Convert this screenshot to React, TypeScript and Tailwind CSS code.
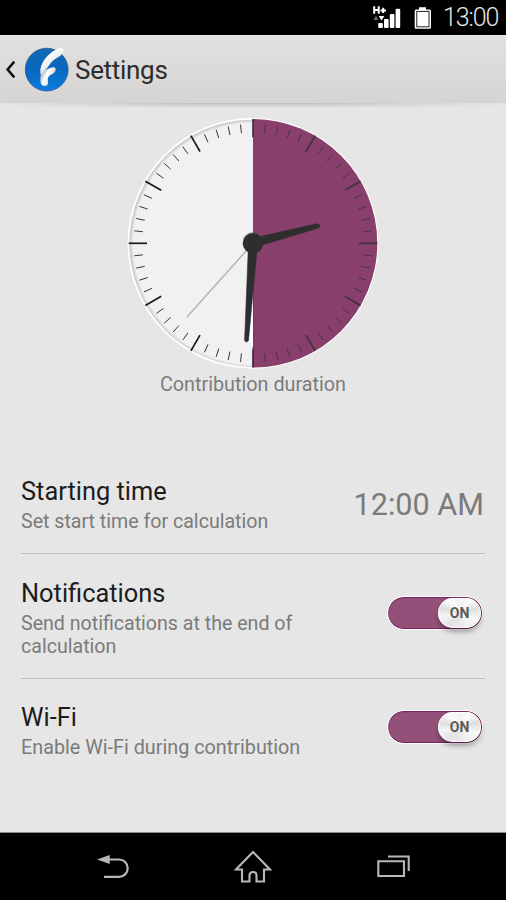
interface ToggleProps {
  label: string;
}

interface SettingRowProps {
  title: string;
  summary: string;
  className: string;
  summaryClassName?: string;
  children: React.ReactNode;
}

const StatusBar = () => {
  return (
    <div className="flex h-[35px] shrink-0 items-center justify-end bg-black pr-[8px] text-white">
      <svg width="64" height="35" viewBox="370 0 64 35" fill="#fff">
        <path d="M374.2 6.3V13.7M378.7 6.3V13.7M374 10H379M380.5 10.4H386M383.2 7.7V13" stroke="#fff" strokeWidth="2" fill="none" />
        <path d="M373.3 20 376 15.7 378.7 20Z" fill="#666" />
        <path d="M378.7 16H384.3L381.5 20.4Z" />
        <rect x="378.2" y="23" width="4.6" height="5" rx="1" />
        <rect x="384" y="19" width="4.6" height="9" rx="1" />
        <rect x="389.8" y="14" width="4.6" height="14" rx="1" />
        <rect x="395.6" y="8.7" width="4.6" height="19.3" rx="1" />
        <path d="M419 7.2H426V9.5H429.5Q431 9.5 431 11V27.3Q431 28.8 429.5 28.8H416Q414.7 28.8 414.7 27.3V11Q414.7 9.5 416 9.5H419Z" />
        <rect x="416.8" y="11.4" width="12.2" height="15.4" fill="none" stroke="#222" strokeWidth="1" />
      </svg>
      <span className="ml-[9px] w-[55px] text-right text-[25px] leading-[35px] font-light tracking-[-1.1px] whitespace-nowrap text-[#e6e6e6]">
        13:00
      </span>
    </div>
  );
};

const AppLogo = () => {
  return (
    <svg width="46" height="46" viewBox="0 0 46 46">
      <defs>
        <linearGradient id="disc" x1="0" y1="0" x2="0" y2="1">
          <stop offset="0" stopColor="#1568b4" />
          <stop offset="0.5" stopColor="#0868bf" />
          <stop offset="1" stopColor="#0a7de0" />
        </linearGradient>
        <linearGradient id="feather" x1="0.3" y1="0.2" x2="0.6" y2="0.6">
          <stop offset="0" stopColor="#fff" />
          <stop offset="0.6" stopColor="#f2f2f2" />
          <stop offset="1" stopColor="#c9cdd0" />
        </linearGradient>
        <linearGradient id="stem" x1="0.2" y1="0.3" x2="0.7" y2="0.6">
          <stop offset="0" stopColor="#c2c8cc" />
          <stop offset="0.4" stopColor="#fff" />
          <stop offset="1" stopColor="#d9dde0" />
        </linearGradient>
      </defs>
      <circle cx="22.7" cy="22.6" r="21.4" fill="url(#disc)" stroke="#235b8c" strokeWidth="0.8" />
      <path
        d="M16.8 28.3C19.6 24 25.5 20.4 29.3 20.3C32 20.3 32.4 23 30.6 25.2C28.8 27.5 25.1 27.9 24 31C23.5 33 24.5 34.8 24 37C23 39.6 18.5 39.5 17.1 36.9C16.2 34.5 16.1 31 16.8 28.3Z"
        fill="url(#stem)"
      />
      <path
        d="M36 1.3C38.8 0.6 40.4 2 39.7 4.4C38.5 8.4 33.4 9.9 29.3 13.4C24.6 17.4 23.4 22.5 17 28.6C15.5 24.8 16.4 19.8 18.6 15.8C22 9.2 28.9 3 36 1.3Z"
        fill="url(#feather)"
      />
    </svg>
  );
};

const Header = () => {
  return (
    <header className="relative flex h-[68px] shrink-0 items-center border-t border-[#eeecea] bg-linear-to-b from-[#e3e1df] to-[#d5d4d2]">
      <svg className="ml-[5px]" width="12" height="20" viewBox="0 0 12 20" fill="none" stroke="#111" strokeWidth="2.5">
        <path d="M9.3 1.6 2.6 9.5 9.3 17.4" />
      </svg>
      <div className="ml-[7px]">
        <AppLogo />
      </div>
      <h1 className="ml-[5px] text-[26px] leading-[30px] tracking-[-0.3px] text-[#2c2c2c]">Settings</h1>
      <div className="absolute inset-x-0 top-full h-[5px] bg-linear-to-b from-[#bcbcbc] to-[#bcbcbc]/0 mask-r-from-60% mask-l-from-60%" />
    </header>
  );
};

const Clock = () => {
  const ticks = Array.from({ length: 60 }, (_, i) => i);

  return (
    <svg width="256" height="256" viewBox="-128 -128.3 256 256">
      <defs>
        <radialGradient id="face" gradientUnits="userSpaceOnUse" cx="1" cy="0.5" r="125">
          <stop offset="0.965" stopColor="#f1f1f1" />
          <stop offset="1" stopColor="#bdbdbd" />
        </radialGradient>
      </defs>
      <circle r="125.4" fill="#fff" />
      <circle r="123.6" fill="url(#face)" />
      <path d="M0 -124.3A124.3 124.3 0 0 1 0 124.3Z" fill="#883f6b" />
      {ticks.map((i) => {
        const major = i % 5 === 0;
        const right = i > 0 && i < 30;
        return (
          <line
            key={i}
            y1={major ? -124.3 : -119.4}
            y2={major ? -106 : -110.7}
            transform={`rotate(${i * 6})`}
            stroke={right || i % 30 === 0 ? "#3b353a" : "#181818"}
            strokeWidth={major ? 1.7 : 0.8}
          />
        );
      })}
      <path d="M0 0V124" stroke="#4c2c40" strokeWidth="0.6" />
      <path d="M0 20 0 104 -4.5 98Z" fill="#fff" />
      <path d="M0 0 -66.3 74" stroke="#b5b5b5" strokeWidth="1.5" />
      <path d="M-4.5 0 -8.4 97Q-6.4 100.5 -4.5 97L3.8 8Z" fill="#2e2e2e" stroke="#2e2e2e" strokeWidth="0.6" strokeLinejoin="round" />
      <path d="M5 -6.5 63.5 -19.9Q67 -20 67.2 -17.8Q67.4 -15.5 65 -14.7L6 3Z" fill="#2e2e2e" />
      <circle r="10.3" fill="#2e2e2e" />
      <path d="M-9.5 -4.5A10.5 10.5 0 0 1 9.5 -4.5" fill="none" stroke="#555" strokeWidth="0.6" />
    </svg>
  );
};

const Toggle = ({ label }: ToggleProps) => {
  return (
    <button
      type="button"
      className="flex h-[34px] w-[96px] items-center justify-end rounded-full border border-white bg-[#935179] bg-clip-padding shadow-[inset_0_1px_1px_#77255a,inset_0_-1px_0_#77255a,inset_-1px_0_0_#77255a]"
    >
      <span className="mr-px flex h-[30px] w-[43px] items-center justify-center rounded-full bg-[conic-gradient(#f3f3f3,#fafafa_12%,#dedede_21%,#f8f8f8_30%,#e9e9e9_50%,#e3e3e3_62%,#f4f4f4_72%,#dedede_79%,#fafafa_88%,#f3f3f3)] text-[14px] leading-none font-bold text-[#585c59] shadow-[0_4px_5px_rgba(0,0,0,0.3),inset_0_0_1px_1px_rgba(255,255,255,0.8)]">
        {label}
      </span>
    </button>
  );
};

const SettingRow = ({ title, summary, className, summaryClassName = "text-[19.6px]", children }: SettingRowProps) => {
  return (
    <div className={`flex justify-between ${className}`}>
      <div className="w-[290px]">
        <h2 className="text-[25.4px] leading-[33px] text-[#1c1c1c]">{title}</h2>
        <p className={`mt-[2px] leading-[23px] text-[#7b7b7b] ${summaryClassName}`}>{summary}</p>
      </div>
      {children}
    </div>
  );
};

const NavBar = () => {
  return (
    <nav className="flex h-[68px] shrink-0 items-center justify-between border-t border-[#8a8a8a] bg-black px-[96px] pt-[3px]">
      <svg width="34" height="40" viewBox="96 848 34 40" fill="none" stroke="#b8b8b8" strokeWidth="2.2">
        <path d="M106 859.5H119A8.7 8.7 0 0 1 119 876.9H104" />
        <path d="M97 859.5 109.7 855V864Z" fill="#b8b8b8" stroke="none" />
      </svg>
      <svg width="40" height="40" viewBox="233 848 40 40" fill="none" stroke="#b8b8b8" strokeWidth="2.1">
        <path d="M253 852 236 869.5H242V881.5H249.5V875.5Q249.5 872 253 872T256.5 875.5V881.5H264V869.5H270Z" />
      </svg>
      <svg width="34" height="40" viewBox="376 848 34 40" fill="none" stroke="#b8b8b8" strokeWidth="2.1">
        <path d="M378.3 861.3H404V876H378.3ZM388 856.5H408.7V871" />
      </svg>
    </nav>
  );
};

export default function App() {
  return (
    <div className="flex h-[900px] w-[506px] flex-col overflow-hidden bg-[#e6e6e6] font-[Roboto,sans-serif]">
      <StatusBar />
      <Header />
      <main className="flex-1 px-[21px]">
        <section className="flex flex-col items-center pt-[12px]">
          <Clock />
          <p className="text-[19.8px] leading-[28px] text-[#7b7b7b]">Contribution duration</p>
        </section>
        <section className="mt-[76px]">
          <SettingRow title="Starting time" summary="Set start time for calculation" className="border-b border-[#bdbdbd] pb-[20px]">
            <span className="mt-[11px] mr-px text-[30.6px] leading-[38px] text-[#7b7b7b]">12:00 AM</span>
          </SettingRow>
          <SettingRow
            title="Notifications"
            summary="Send notifications at the end of calculation"
            className="border-b border-[#bdbdbd] pt-[23px] pb-[20px]"
          >
            <div className="mt-[19px] mr-[2px]">
              <Toggle label="ON" />
            </div>
          </SettingRow>
          <SettingRow
            title="Wi-Fi"
            summary="Enable Wi-Fi during contribution"
            className="pt-[22px]"
            summaryClassName="text-[19.8px]"
          >
            <div className="mt-[9px] mr-[2px]">
              <Toggle label="ON" />
            </div>
          </SettingRow>
        </section>
      </main>
      <NavBar />
    </div>
  );
}
